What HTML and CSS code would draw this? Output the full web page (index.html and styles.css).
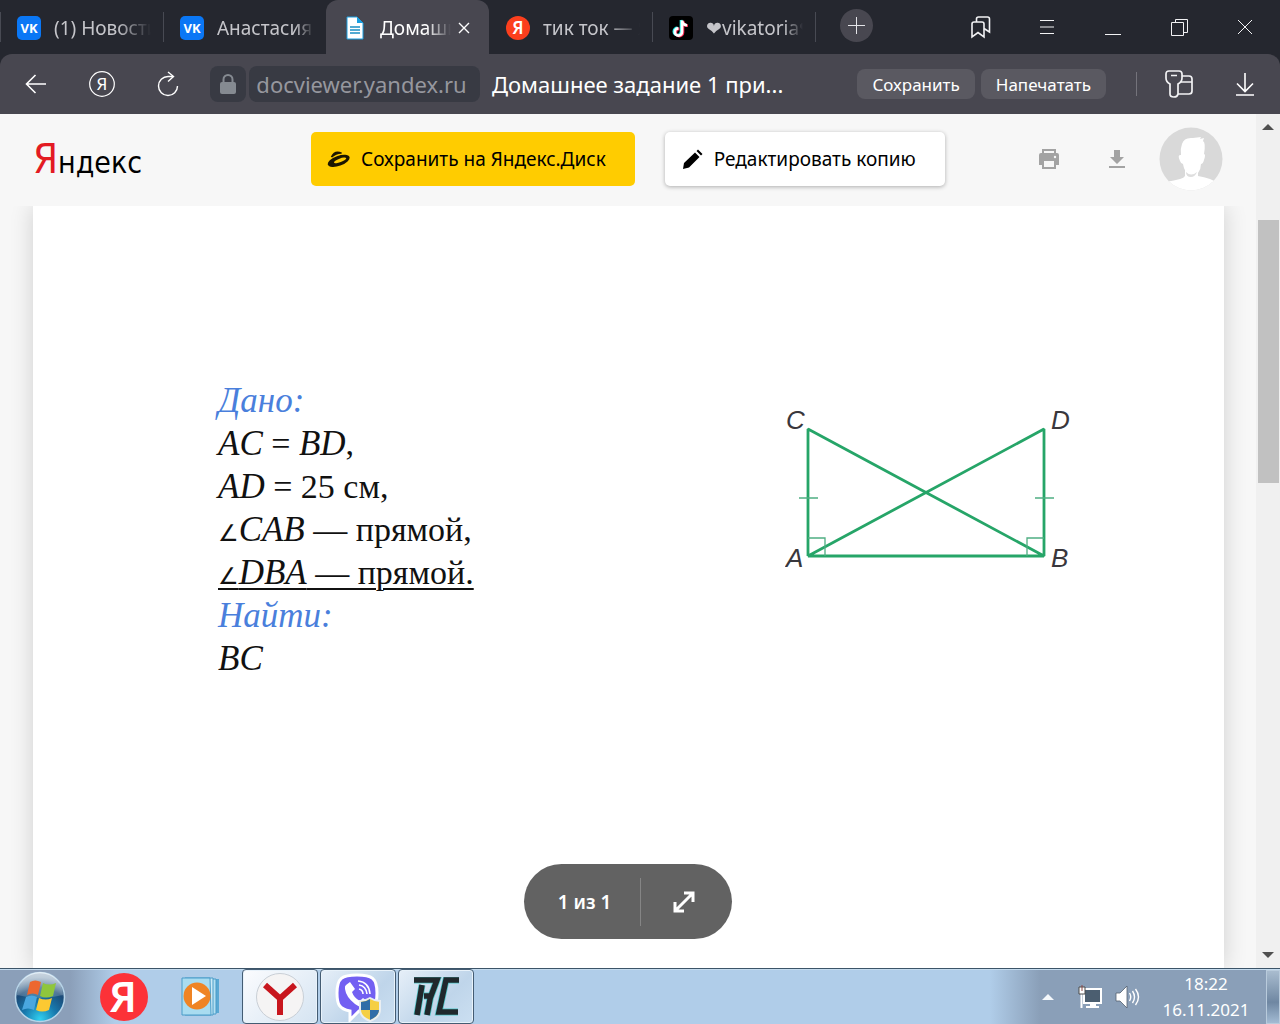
FILE: index.html
```html
<!DOCTYPE html>
<html lang="ru">

<head>
    <meta charset="UTF-8">
    <meta name="viewport" content="width=device-width, initial-scale=1.0">
    <title>Домашнее задание 1</title>
    <link rel="stylesheet" href="styles.css">
</head>

<body>
    <!-- tabs -->
    <header class="tabs">
        <button class="tab">
            <svg width="24" height="24" viewBox="0 0 24 24"><rect width="24" height="24" rx="5" fill="#0a77f5"/><text x="12" y="17" class="vk">VK</text></svg>
            <span class="tab-name">(1) Новости</span>
        </button>
        <button class="tab">
            <svg width="24" height="24" viewBox="0 0 24 24"><rect width="24" height="24" rx="5" fill="#0a77f5"/><text x="12" y="17" class="vk">VK</text></svg>
            <span class="tab-name wide">Анастасия</span>
        </button>
        <div class="tab active">
            <svg width="24" height="24" viewBox="0 0 24 24"><path d="M4 1h10l6 6v16H4z" fill="#fff" stroke="#1a9fe0"/><path d="M14 1v6h6z" fill="#1a9fe0"/><path d="M7 11h10M7 14h10M7 17h10" stroke="#1a8fc4" stroke-width="1.4"/></svg>
            <span class="tab-name">Домашнее</span>
            <button class="tab-close" aria-label="Закрыть вкладку">
                <svg width="12" height="12" viewBox="0 0 12 12"><path d="M1 1l10 10M11 1L1 11" stroke="#fff" stroke-width="1.4"/></svg>
            </button>
        </div>
        <button class="tab">
            <svg width="24" height="24" viewBox="0 0 24 24"><circle cx="12" cy="12" r="12" fill="#fc3f1d"/><text x="12" y="18" class="ya">Я</text></svg>
            <span class="tab-name">тик ток — Яндекс</span>
        </button>
        <button class="tab last">
            <svg width="24" height="24" viewBox="0 0 24 24"><rect width="24" height="24" rx="4" fill="#000"/><g fill="none" stroke-width="2.6"><path d="M12 4v11.5a3.6 3.6 0 1 1-3.6-3.6M12 4c.4 3 2.200 4.600 5 4.800" stroke="#25f4ee"/><path d="M14 5v11.500a3.600 3.600 0 1 1-3.600-3.600M14 5c.4 3 2.200 4.600 5 4.800" stroke="#fe2c55"/><path d="M13 4.500v11.500a3.600 3.600 0 1 1-3.600-3.600M13 4.500c.4 3 2.200 4.600 5 4.800" stroke="#fff"/></g></svg>
            <span class="tab-name wide">❤vikatoria❤</span>
        </button>
        <button class="new-tab" aria-label="Новая вкладка">
            <svg width="17" height="17" viewBox="0 0 17 17"><path d="M8.500 0v17M0 8.500h17" stroke="#e4e4e8"/></svg>
        </button>
        <div class="window-buttons">
            <button class="icon" aria-label="Закладки">
                <svg width="22" height="24" viewBox="0 0 22 24" fill="none" stroke="#f2f2f4" stroke-width="1.6"><path d="M2 9q0-2 2-2h8q2 0 2 2v13l-6-4.500L2 22z"/><path d="M6.500 7V4q0-2 2-2h9q2 0 2 2v13L14 13.500"/></svg>
            </button>
            <button class="icon" aria-label="Меню">
                <svg width="16" height="16" viewBox="0 0 16 16"><path d="M1 1.500h14M1 8h14M1 14.500h14" stroke="#f2f2f4" stroke-width="1.2"/></svg>
            </button>
            <button class="icon" aria-label="Свернуть">
                <svg width="16" height="16" viewBox="0 0 16 16"><path d="M0 15.500h16" stroke="#f2f2f4"/></svg>
            </button>
            <button class="icon" aria-label="Окно">
                <svg width="17" height="17" viewBox="0 0 17 17" fill="none" stroke="#f2f2f4"><path d="M.5 3.500h12v13H.5zM4.500 3.500v-3h12v13h-4"/></svg>
            </button>
            <button class="icon" aria-label="Закрыть">
                <svg width="16" height="16" viewBox="0 0 16 16"><path d="M1 1l14 14M15 1L1 15" stroke="#f2f2f4"/></svg>
            </button>
        </div>
    </header>

    <!-- address bar -->
    <div class="toolbar">
        <button class="icon" aria-label="Назад">
            <svg width="22" height="20" viewBox="0 0 22 20"><path d="M21 10H1M10.500 1L1.500 10l9 9" fill="none" stroke="#fff" stroke-width="1.6"/></svg>
        </button>
        <button class="icon" aria-label="Яндекс">
            <svg width="26" height="26" viewBox="0 0 26 26"><circle cx="13" cy="13" r="12.300" fill="none" stroke="#fff" stroke-width="1.2"/><text x="13" y="19" class="ya-thin">Я</text></svg>
        </button>
        <button class="icon" aria-label="Обновить">
            <svg width="22" height="28" viewBox="0 0 22 28" fill="none" stroke="#fff" stroke-width="1.4"><path d="M16 6.500H11A9.500 9.500 0 1 0 20.500 16"/><path d="M11 2l5.500 4.500-5.500 5"/></svg>
        </button>
        <button class="lock" aria-label="Защищено">
            <svg width="16" height="20" viewBox="0 0 16 20"><rect y="8" width="16" height="12" rx="2" fill="#858a91"/><path d="M3.500 9V5.500a4.500 4.500 0 0 1 9 0V9" fill="none" stroke="#858a91" stroke-width="2"/></svg>
        </button>
        <a class="host" href="#">docviewer.yandex.ru</a>
        <div class="title">Домашнее задание 1 при...</div>
        <button class="chip">Сохранить</button>
        <button class="chip">Напечатать</button>
        <div class="line"></div>
        <button class="icon keys" aria-label="Пароли">
            <svg width="28" height="28" viewBox="0 0 28 28" fill="none" stroke="#f2f2f4" stroke-width="1.7"><path d="M4 1h10q3 0 3 3v4q0 4-4 6v10q-.5 3-4 3-4 0-4-3V14q-4-2-4-6V4q0-3 3-3zM6 5.500h6"/><path d="M17 6h7q3 0 3 3v12q0 3-3 3H13M15.500 12H27"/></svg>
        </button>
        <button class="icon" aria-label="Загрузки">
            <svg width="20" height="24" viewBox="0 0 20 24" fill="none" stroke="#fff" stroke-width="1.6"><path d="M10 1v18M2 11.500l8 8 8-8M1 23h18"/></svg>
        </button>
    </div>

    <div class="viewer">
        <main class="content">
            <div class="head">
                <a class="logo" href="#"><span>Я</span>ндекс</a>
                <div class="actions">
                    <button class="save">
                        <svg width="24" height="18" viewBox="0 0 24 18"><g transform="rotate(-20 12 9)"><ellipse cx="12" cy="11" rx="11.500" ry="5" fill="#1c1600"/><ellipse cx="13.500" cy="11" rx="6.500" ry="1.800" fill="#fc0"/><path d="M6 4.500q6-6 12 0l-1 .6q-5-1.600-10 .4z" fill="#1c1600"/></g></svg>
                        Сохранить на Яндекс.Диск
                    </button>
                    <button class="edit">
                        <svg width="21" height="21" viewBox="0 0 21 21"><path d="M1 20l1-6L13 3.500l4.500 4.500L7 18.500zM14.500 2L16 .5 20.500 5 19 6.500z" fill="#000"/></svg>
                        Редактировать копию
                    </button>
                </div>
                <div class="tools">
                    <button aria-label="Печать">
                        <svg width="20" height="20" viewBox="0 0 20 20"><path d="M3 0h14v4H3zM2 4h16q2 0 2 2v10h-3v4H3v-4H0V6q0-2 2-2z" fill="#a3a3a3"/><path d="M5 2h10v2H5zM5 12h10v6H5z" fill="#f7f7f7"/><circle cx="16" cy="8" r="1.200" fill="#f7f7f7"/></svg>
                    </button>
                    <button aria-label="Скачать">
                        <svg width="16" height="18" viewBox="0 0 16 18"><path d="M5 0h6v7h4l-7 7-7-7h4zM0 16h16v2H0z" fill="#a3a3a3"/></svg>
                    </button>
                    <button class="avatar" aria-label="Профиль">
                        <svg width="64" height="64" viewBox="0 0 64 64"><defs><clipPath id="round"><circle cx="32" cy="32" r="31.500"/></clipPath></defs><g clip-path="url(#round)"><path d="M0 0h64v64H0z" fill="#d9d9d9"/><path d="M22 28q-4-1-1 6 1 3 3 3 1 5 2 6v6q-1 2-5 3Q8 55 0 56v8h64v-6q-8-4-13-6-6-2-12-3v-3q3-4 3-9 2 0 3-4 2-6 0-6 2-11-1-13l1-3-4 1 1-2-8 1q-9-1-11 6-2 5-1 11z" fill="#fff"/><path d="M27 45q5 5 11 0-2 5-6 5-5 0-5-5z" fill="#dedede"/></g></svg>
                    </button>
                </div>
            </div>
            <article class="page">
                <div class="task">
                    <p class="blue">Дано:</p>
                    <p><i>AC</i> = <i>BD</i>,</p>
                    <p><i>AD</i> = 25 см,</p>
                    <p><span class="angle">∠</span><i>CAB</i> — прямой,</p>
                    <p class="under"><span class="angle">∠</span><i>DBA</i> — прямой.</p>
                    <p class="blue">Найти:</p>
                    <p><i>BC</i></p>
                </div>
                <svg class="figure" width="288" height="168" viewBox="0 0 288 168">
                    <path d="M23 148V21l236 127V21L23 148h236" fill="none" stroke="#26a568" stroke-width="2.800" stroke-linejoin="bevel"/>
                    <path d="M14 90h19M250 90h19M23 130h17v18M259 130h-17v18" fill="none" stroke="#4fae82" stroke-width="1.300"/>
                    <text x="1" y="21">C</text>
                    <text x="266" y="21">D</text>
                    <text x="1" y="159">A</text>
                    <text x="266" y="159">B</text>
                </svg>
            </article>
            <div class="pager">
                <span>1 из 1</span>
                <button aria-label="На весь экран">
                    <svg width="22" height="22" viewBox="0 0 22 22" fill="none" stroke="#fff" stroke-width="3"><path d="M3 19L19 3M11 2h9v9M2 11v9h9"/></svg>
                </button>
            </div>
        </main>
        <div class="scroll">
            <button aria-label="Вверх"><svg width="12" height="6" viewBox="0 0 12 6"><path d="M0 6l6-6 6 6z" fill="#505050"/></svg></button>
            <div class="track"><div class="thumb"></div></div>
            <button aria-label="Вниз"><svg width="12" height="6" viewBox="0 0 12 6"><path d="M0 0l6 6 6-6z" fill="#505050"/></svg></button>
        </div>
    </div>

    <!-- taskbar -->
    <footer class="taskbar">
        <button class="start" aria-label="Пуск">
            <svg width="52" height="52" viewBox="0 0 52 52">
                <defs>
                    <radialGradient id="orb" cx="50%" cy="95%" r="85%"><stop offset="0" stop-color="#30d0f0"/><stop offset=".4" stop-color="#1779ad"/><stop offset=".75" stop-color="#1c4b78"/><stop offset="1" stop-color="#6f8fac"/></radialGradient>
                    <linearGradient id="shine" x1="0" y1="0" x2="0" y2="1"><stop offset="0" stop-color="#fff" stop-opacity=".65"/><stop offset="1" stop-color="#fff" stop-opacity=".15"/></linearGradient>
                </defs>
                <circle cx="26" cy="26" r="24.500" fill="url(#orb)" stroke="#b7d4e8" stroke-width="1.500"/>
                <path d="M3 24a23 23 0 0 1 46 0q-23 6-46 0z" fill="url(#shine)"/>
                <path d="M16 11q5-3 11 0l-3 13q-5-3-11 0z" fill="#ec6730"/>
                <path d="M29 12q6 3 13 0l-3 13q-7 3-13 0z" fill="#8fc63d"/>
                <path d="M12 26q6-3 11 0l-3 13q-6-3-12 0z" fill="#4aa7e0"/>
                <path d="M25 27q7 3 13 0l-3 12q-7 3-13 0z" fill="#fcc932"/>
            </svg>
        </button>
        <button class="app" aria-label="Яндекс">
            <svg width="48" height="48" viewBox="0 0 48 48"><circle cx="24" cy="24" r="24" fill="#fc3238"/><text x="23" y="39" class="ya-big">Я</text></svg>
        </button>
        <button class="app" aria-label="Проигрыватель">
            <svg width="42" height="42" viewBox="0 0 42 42"><path d="M10 3h28v34H10z" fill="#5aa9d4"/><path d="M7 3h28v35H7z" fill="#b5e0f2" stroke="#4a9cc8"/><path d="M4 2h28v37H4z" fill="#cdebf7" stroke="#4a9cc8"/><path d="M1 2h28l1 37H1z" fill="#a9dcf0" stroke="#4a9cc8"/><circle cx="16" cy="20" r="13.500" fill="#ef8424"/><path d="M11 11v18L25 20z" fill="#fff"/></svg>
        </button>
        <button class="app open" aria-label="Яндекс.Браузер">
            <svg width="48" height="48" viewBox="0 0 48 48"><circle cx="24" cy="24" r="23.500" fill="#f5f4f4" stroke="#c9cfd6"/><path d="M9 12l15 13.500L39 12M24 24v18" fill="none" stroke="#c8161d" stroke-width="6"/></svg>
        </button>
        <button class="app open" aria-label="Viber">
            <svg width="48" height="50" viewBox="0 0 48 50">
                <path d="M23 3c15 0 20 3 20 18s-5 18-18 18l-9 9v-9C5 37 3 32 3 21 3 6 8 3 23 3z" fill="#7360f2" stroke="#fff" stroke-width="3"/>
                <path d="M12 13l4-3 5 7-3 3q2 6 8 9l3-3 6 5-3 4q-4 2-11-3-9-7-10-15-.5-3 1-4z" fill="#fff"/>
                <path d="M24 9q11 1 12 13M25 13q7 1 8 9M25 17q4 1 4 5" fill="none" stroke="#fff" stroke-width="1.600"/>
                <path d="M36 26q5 3 10 3v9q0 7-10 11-10-4-10-11v-9q5 0 10-3z" fill="#f5cf45" stroke="#e9eef2" stroke-width="2"/>
                <path d="M36 27v11H27v-8q5 0 9-3zM36 38h9q0 6-9 10z" fill="#2f6da8"/>
            </svg>
        </button>
        <button class="app open" aria-label="AC">
            <svg width="48" height="40" viewBox="0 0 48 40" fill="none"><path id="mark" d="M10 8L5 38M2 3h23l-6 16h-7M19 17l-4 21M47 3H34l-7 32h19" stroke="#4fc4c6" stroke-width="7"/><path d="M10 8L5 38M2 3h23l-6 16h-7M19 17l-4 21M47 3H34l-7 32h19" stroke="#20282c" stroke-width="5.500"/></svg>
        </button>
        <div class="tray">
            <svg width="12" height="6" viewBox="0 0 12 6"><path d="M0 6l6-6 6 6z" fill="#f4f8fb"/></svg>
            <svg class="net" width="25" height="24" viewBox="0 0 25 24"><path d="M6 4h17v14H6z" fill="#4b5e70" stroke="#fff" stroke-width="2"/><path d="M12 19h6v3h-6zM8 21h13v2H8z" fill="#fff"/><path d="M3.500 8v15" stroke="#fff" stroke-width="2"/><path d="M1 2h6v7H1z" fill="#fff" stroke="#4b4b4b"/><path d="M4 0v6" stroke="#8e4a48"/></svg>
            <svg width="25" height="24" viewBox="0 0 25 24"><path d="M1 8h4l7-7v22l-7-7H1z" fill="#fff" stroke="#53616e" stroke-width=".8"/><path d="M14.500 8q2.500 4 0 8M17.500 6q4 6 0 12M20.500 4q6 8 0 16" fill="none" stroke="#fff" stroke-width="1.400"/></svg>
        </div>
        <div class="clock"><div>18:22</div><div>16.11.2021</div></div>
        <button class="desktop" aria-label="Свернуть все окна"></button>
    </footer>
</body>

</html>
```

FILE: styles.css
```css
* {
    box-sizing: border-box;
    padding: 0;
    margin: 0;
}

html,
body {
    height: 100%;
}

body {
    display: flex;
    flex-direction: column;
    overflow: hidden;
    background-color: #25272f;
    font-family: "Noto Sans", "Open Sans", sans-serif;
}

button {
    border: none;
    background: none;
    color: inherit;
    font-family: inherit;
    cursor: pointer;
}

svg {
    flex-shrink: 0;
}

a {
    text-decoration: none;
}

/* tabs */
.tabs {
    display: flex;
    height: 54px;
    color: #c5c5ca;
}

.tab {
    display: flex;
    align-items: center;
    gap: 13px;
    width: 163px;
    padding: 2px 12px 0 17px;
    font-size: 19px;
    position: relative;
}

.tab::before,
.last::after {
    content: "";
    position: absolute;
    left: 0;
    top: 12px;
    height: 30px;
    border-left: 1px solid #484a53;
}

.last::after {
    left: 100%;
}

.tab.active::before,
.active + .tab::before {
    display: none;
}

.tab-name {
    flex: 1;
    min-width: 0;
    overflow: hidden;
    white-space: nowrap;
    text-align: left;
    mask-image: linear-gradient(to right, #000 65%, transparent);
}

.tab-name.wide {
    mask-image: linear-gradient(to right, #000 80%, transparent);
}

.active {
    background-color: #484750;
    border-radius: 12px 12px 0 0;
    color: #fff;
    padding-right: 19px;
}

.active .tab-close {
    margin-left: -6px;
}

.tab-close {
    display: flex;
}

.vk,
.ya,
.ya-thin,
.ya-big {
    fill: #fff;
    text-anchor: middle;
}

.vk {
    font-size: 13px;
    font-weight: bold;
}

.ya {
    font-size: 17px;
    font-weight: 600;
}

.ya-thin {
    font-size: 17px;
}

.ya-big {
    font-size: 42px;
    font-weight: 600;
}

.new-tab {
    display: flex;
    align-items: center;
    justify-content: center;
    width: 33px;
    height: 33px;
    margin: 9px 0 0 25px;
    border-radius: 50%;
    background-color: #484750;
}

.window-buttons {
    display: flex;
    margin-left: auto;
    margin-right: 2px;
}

.icon {
    display: flex;
    align-items: center;
    justify-content: center;
    width: 66px;
}

/* address bar */
.toolbar {
    display: flex;
    align-items: center;
    height: 60px;
    padding: 0 2px 0 3px;
    background-color: #484750;
    border-radius: 12px 12px 0 0;
}

.lock,
.host {
    display: flex;
    align-items: center;
    justify-content: center;
    height: 36px;
    border-radius: 8px;
    background-color: #383a43;
}

.lock {
    width: 36px;
    margin: 0 3px 0 9px;
}

.host {
    width: 231px;
    padding-right: 6px;
    font-size: 22px;
    color: #96979e;
}

.title {
    flex: 1;
    padding-left: 12px;
    font-size: 22px;
    color: #fff;
    white-space: nowrap;
}

.chip {
    height: 30px;
    padding: 0 15px;
    margin-right: 6px;
    border-radius: 8px;
    background-color: #5a5961;
    color: #fff;
    font-size: 17px;
}

.line {
    width: 1px;
    height: 24px;
    margin: 0 9px 0 24px;
    background-color: #74737b;
}

/* document viewer */
.viewer {
    flex: 1;
    min-height: 0;
    display: flex;
    background-color: #f7f7f7;
}

.content {
    flex: 1;
    display: flex;
    flex-direction: column;
    position: relative;
    overflow: hidden;
}

.head {
    display: flex;
    align-items: center;
    height: 92px;
    padding: 0 33px 2px;
    background-color: #f7f7f7;
    z-index: 1;
}

.logo {
    width: 278px;
    color: #000;
    font-family: "Liberation Sans Narrow", "DejaVu Sans Condensed", sans-serif;
    font-size: 30px;
}

.logo span {
    color: #e31b23;
    font-size: 40px;
}

.actions {
    display: flex;
    gap: 30px;
}

.save,
.edit {
    display: flex;
    align-items: center;
    gap: 11px;
    height: 54px;
    padding: 0 29px 0 15px;
    border-radius: 5px;
    color: #000;
    font-size: 19px;
    white-space: nowrap;
}

.save {
    background-color: #fc0;
}

.edit {
    background-color: #fff;
    box-shadow: 0 1px 4px rgba(0, 0, 0, 0.3);
    padding-left: 17px;
}

.tools {
    display: flex;
    align-items: center;
    margin-left: auto;
}

.tools button {
    display: flex;
    margin-right: 50px;
}

.tools .avatar {
    margin-left: -16px;
    margin-right: 0;
}

.page {
    flex: 1;
    display: flex;
    justify-content: space-between;
    margin: 0 32px 0 33px;
    padding: 173px 151px 0 185px;
    background-color: #fff;
    box-shadow: 0 0 22px rgba(0, 0, 0, 0.16);
}

.task {
    color: #111;
    font-family: "Liberation Serif", serif;
    font-size: 34px;
    line-height: 43px;
    white-space: nowrap;
}

.task p {
    height: 43px;
}

.task i,
.task .blue {
    font-size: 35px;
}

.blue {
    color: #4a7fdc;
    font-style: italic;
}

.under {
    text-decoration: underline 2px;
    text-underline-offset: 4px;
}

.angle {
    font-family: "DejaVu Sans", sans-serif;
    font-size: 23px;
}

.figure {
    margin-top: 29px;
}

.figure text {
    fill: #39373c;
    font: italic 26px "Liberation Sans", sans-serif;
}

.pager {
    position: absolute;
    left: 50%;
    bottom: 29px;
    transform: translateX(-50%);
    display: flex;
    align-items: center;
    width: 208px;
    height: 75px;
    border-radius: 38px;
    background-color: #626262;
    color: #fff;
    font-size: 19px;
    font-weight: 600;
    z-index: 1;
}

.pager span {
    flex: 1;
    padding-left: 5px;
    text-align: center;
}

.pager button {
    display: flex;
    align-items: center;
    height: 48px;
    padding: 0 37px 0 32px;
    border-left: 1px solid #858585;
}

.scroll {
    display: flex;
    flex-direction: column;
    width: 24px;
    background-color: #f0f0f0;
}

.scroll button {
    height: 26px;
}

.scroll svg {
    display: block;
    margin: auto;
}

.track {
    flex: 1;
    padding: 80px 1px 0 2px;
}

.thumb {
    height: 263px;
    background-color: #c1c1c1;
}

/* taskbar */
.taskbar {
    display: flex;
    align-items: center;
    gap: 2px;
    height: 56px;
    border-top: 1px solid #3c5468;
    box-shadow: inset 0 1px 0 #c5dcef;
    background: linear-gradient(to right, #8b9fb9 0, #8b9fb9 70px, #b0cde9 115px, #b0cde9 calc(100% - 290px), #8a9fb8 calc(100% - 240px));
}

.start {
    display: flex;
    justify-content: center;
    width: 84px;
    padding-right: 4px;
}

.app {
    display: flex;
    align-items: center;
    justify-content: center;
    width: 76px;
    height: 55px;
}

.open {
    border: 1px solid #445c73;
    border-radius: 4px;
    background: linear-gradient(135deg, #e6eff8, #bfd5ea 60%, #cbdff1);
    box-shadow: inset 0 0 0 1px #e8f2fa;
}

.start + .app + .app + .open {
    background: linear-gradient(135deg, #fbfcfe, #d5e4f2);
}

.tray {
    display: flex;
    align-items: center;
    gap: 12px;
    margin-left: auto;
    padding-right: 18px;
}

.net {
    margin-left: 12px;
}

.clock {
    width: 92px;
    color: #fff;
    font-size: 17px;
    line-height: 26px;
    text-align: center;
    white-space: nowrap;
}

.desktop {
    width: 14px;
    height: 54px;
    margin-left: 12px;
    border: 1px solid #b9cbdc;
    background: linear-gradient(to bottom, #a9bccf, #6f87a2 60%, #a3bbd3);
}
```
